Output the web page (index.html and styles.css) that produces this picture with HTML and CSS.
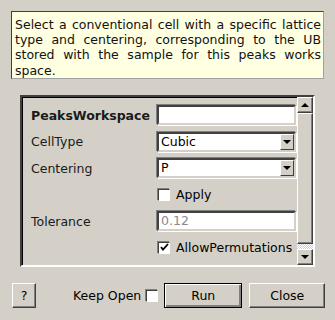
FILE: index.html
```html
<!DOCTYPE html>
<html lang="en">
<head>
  <meta charset="UTF-8" />
  <title>Select Cell</title>
  <link rel="stylesheet" href="styles.css">
</head>
<body>
  <div class="tip">Select a conventional cell with a specific lattice type and centering, corresponding to the UB stored with the sample for this peaks works space.</div>

  <div class="frame">
    <div class="props">
      <label class="bold">PeaksWorkspace</label>
      <div class="field"><span class="edit"></span></div>

      <label>CellType</label>
      <div class="field"><span class="combo">Cubic<span class="drop"><i class="down"></i></span></span></div>

      <label>Centering</label>
      <div class="field"><span class="combo">P<span class="drop"><i class="down"></i></span></span></div>

      <label></label>
      <div class="field"><span class="check"></span>Apply</div>

      <label>Tolerance</label>
      <div class="field"><span class="edit disabled">0.12</span></div>

      <label></label>
      <div class="field"><span class="check">
        <svg width="9" height="9" viewBox="0 0 9 9"><path d="M1 4 L3 6.5 L8 1" fill="none" stroke="#000" stroke-width="1.8"/></svg>
      </span>AllowPermutations</div>
    </div>
    <div class="scroll">
      <span class="sbtn"><i class="up"></i></span>
      <span class="thumb"></span>
      <span class="dither"></span>
      <span class="sbtn"><i class="down"></i></span>
    </div>
  </div>

  <div class="buttons">
    <button class="btn help">?</button>
    <span class="keep">Keep Open <span class="check"></span></span>
    <button class="btn run">Run</button>
    <button class="btn close">Close</button>
  </div>
</body>
</html>
```

FILE: styles.css
```css
body {
  margin: 0;
  background: #d4d0c8;
  color: #000;
  font-family: "DejaVu Sans", sans-serif;
  font-size: 12.5px;
  width: 335px;
  height: 320px;
  overflow: hidden;
}
.tip {
  margin: 11px 0 0 11px;
  width: 306px;
  height: 61px;
  padding: 5px 2px 0 3px;
  background: #ffffe1;
  border: 1px solid;
  border-color: #404040 #a0a0a0 #a0a0a0 #404040;
  line-height: 15.2px;
  text-align: justify;
  color: #111;
}
.frame {
  margin: 16px 0 0 20px;
  width: 291px;
  height: 168px;
  border: 2px solid;
  border-color: #404040 #ffffff #ffffff #404040;
  box-shadow: inset 1px 1px 0 #000;
  display: flex;
  overflow: hidden;
}
.props {
  flex: 1;
  display: grid;
  grid-template-columns: 126px 139px;
  grid-auto-rows: 20px;
  row-gap: 6.6px;
  padding: 8px 0 0 9px;
  align-items: center;
}
.props label {
  color: #1a1a1a;
}
.bold {
  font-weight: bold;
}
.field {
  display: flex;
  align-items: center;
  height: 20px;
}
.edit, .combo {
  box-sizing: border-box;
  width: 139px;
  height: 20px;
  background: #fff;
  border: 2px solid;
  border-color: #404040 #d4d0c8 #d4d0c8 #404040;
  box-shadow: -1px -1px 0 #808080, 1px 1px 0 #fff;
  padding: 0 2px;
  line-height: 16px;
  display: flex;
  align-items: center;
}
.combo {
  justify-content: space-between;
  padding-right: 0;
}
.disabled {
  color: #8a8a8a;
}
.drop {
  box-sizing: border-box;
  width: 14px;
  height: 16px;
  background: #d4d0c8;
  border: 1px solid;
  border-color: #fff #404040 #404040 #fff;
  display: flex;
  align-items: center;
  justify-content: center;
}
.down, .up {
  width: 0;
  height: 0;
  border-left: 4px solid transparent;
  border-right: 4px solid transparent;
}
.down {
  border-top: 4px solid #000;
}
.up {
  border-bottom: 4px solid #000;
}
.check {
  box-sizing: border-box;
  width: 12px;
  height: 12px;
  background: #fff;
  border: 1px solid;
  border-color: #404040 #fff #fff #404040;
  box-shadow: -1px -1px 0 #808080;
  margin: 0 6px 0 1px;
  display: inline-flex;
  align-items: center;
  justify-content: center;
}
.scroll {
  width: 16px;
  display: flex;
  flex-direction: column;
}
.sbtn, .thumb {
  box-sizing: border-box;
  background: #d4d0c8;
  border: 1px solid;
  border-color: #fff #404040 #404040 #fff;
  box-shadow: inset -1px -1px 0 #808080;
  display: flex;
  align-items: center;
  justify-content: center;
}
.sbtn {
  height: 16px;
}
.thumb {
  height: 131px;
}
.dither {
  height: 5px;
  background: repeating-conic-gradient(#fff 0 25%, #d4d0c8 0 50%) 0 0 / 2px 2px;
}
.buttons {
  display: flex;
  align-items: center;
  margin: 16px 0 0 12px;
  height: 25px;
}
.btn {
  box-sizing: border-box;
  height: 25px;
  font-family: "DejaVu Sans", sans-serif;
  font-size: 12.5px;
  color: #000;
  background: #d4d0c8;
  border: 1px solid;
  border-color: #fff #404040 #404040 #fff;
  box-shadow: inset -1px -1px 0 #808080;
  padding: 0;
}
.help {
  width: 24px;
}
.keep {
  display: flex;
  align-items: center;
  margin-left: 37px;
}
.keep .check {
  margin-left: 5px;
  margin-right: 6px;
}
.run {
  width: 78px;
  border: 1px solid #000;
  box-shadow: inset 1px 1px 0 #fff, inset -2px -2px 0 #808080;
}
.close {
  width: 76px;
  margin-left: 7px;
}
```
